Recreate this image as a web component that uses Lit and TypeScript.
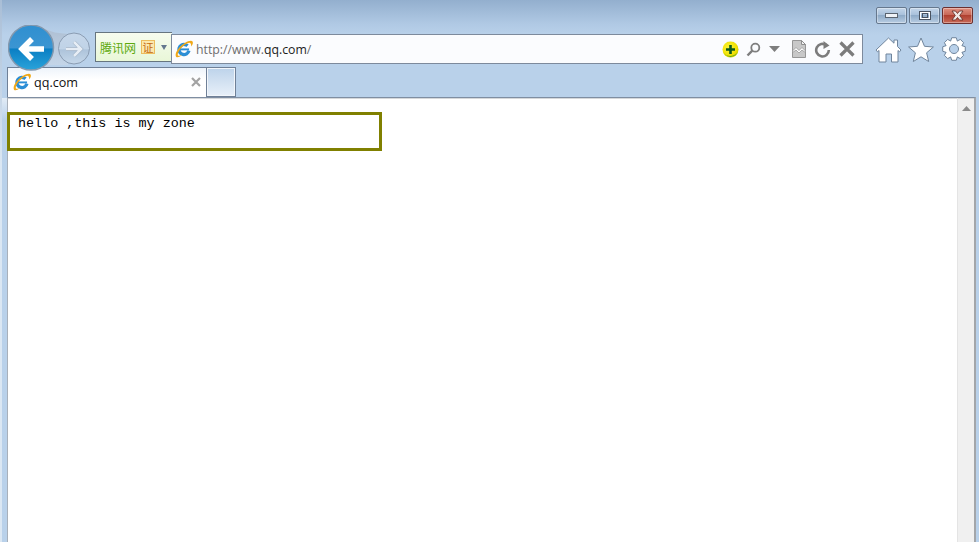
import { LitElement, html, css, svg } from "lit";
import { customElement } from "lit/decorators.js";

const ieLogo = (size: number) => html`<svg class="ie" width=${size} height=${size} viewBox="0 0 16 16">
  <circle cx="8" cy="8.400" r="4.500" fill="none" stroke="#2b8ed6" stroke-width="3" stroke-dasharray="23 6" transform="rotate(14 8 8.400)"/>
  <rect x="4.500" y="7.500" width="8" height="1.700" fill="#2b8ed6"/>
  <path d="M.9 14.800C-.6 12.400 3 6 8.400 2.800 12 .7 14.800.2 15.600 1.300c.7 1 .1 2.900-1.100 4.500-.1-1.700-.4-3.200-1.500-3.400C11.400 2.200 5 6 2.900 11c-.6 1.500-.6 2.500-.1 3 .8.300 2.300-.1 3.700-1.100-1.700 1.900-4.500 3.400-5.600 1.900z" fill="#f0a818"/>
</svg>`;

const gearPath = (() => {
  const pts: string[] = [];
  const cx = 12, cy = 12, teeth = 8;
  for (let i = 0; i < teeth; i++) {
    const a = (i / teeth) * Math.PI * 2;
    const w = 0.2, g = 0.2;
    const p = (r: number, t: number) => `${(cx + r * Math.cos(t)).toFixed(2)} ${(cy + r * Math.sin(t)).toFixed(2)}`;
    pts.push(p(8.6, a - w - g), p(11.5, a - w), p(11.5, a + w), p(8.6, a + w + g));
  }
  return "M" + pts.join("L") + "Z";
})();

@customElement("app-root")
export class AppRoot extends LitElement {
  static styles = css`
    :host { display: flex; flex-direction: column; width: 979px; height: 542px; overflow: hidden; position: relative;
      background: #b9d1ea; font-family: "Open Sans", "Noto Sans", sans-serif; }
    .edge { position: absolute; left: 0; top: 0; bottom: 0; width: 2px; background: linear-gradient(#a9bed6, #dbe7f3 30%, #dbe7f3); }
    .top { height: 24px; box-sizing: border-box; padding: 7px 6px 0 0; display: flex; justify-content: flex-end; gap: 2px;
      background: linear-gradient(#93afce, #b0c9e4); }
    .wbtn { width: 31px; height: 17px; box-sizing: border-box; border: 1px solid #66788e; border-radius: 2px;
      display: flex; align-items: center; justify-content: center;
      background: linear-gradient(#c4d6ea 0, #a9c1db 45%, #8fabc8 50%, #b8cde3 100%); box-shadow: inset 0 0 0 1px rgba(255,255,255,.35); }
    .wbtn.close { width: 31px; border-color: #6b3030; background: linear-gradient(#e09080 0, #c86858 45%, #b04030 50%, #c86a58 100%); }
    .nav { height: 43px; display: flex; align-items: flex-start; padding-left: 8px;
      background: linear-gradient(#b0c9e4, #b9d1ea 25%); }
    .arrows { flex: none; margin-top: 1px; margin-bottom: -4px; position: relative; z-index: 2; }
    .ident { flex: none; box-sizing: border-box; margin-left: 3px; margin-top: 8px; width: 77px; height: 30px;
      border: 1px solid #66757f; border-right: none; background: linear-gradient(#f6fcee, #e9f7d8);
      display: flex; align-items: center; padding-left: 4px; }
    .cn { font: 12px "Noto Sans CJK SC", sans-serif; color: #5da90e; letter-spacing: 0; }
    .cert { font: 12px/13px "Noto Sans CJK SC", sans-serif; box-sizing: border-box; width: 14px; height: 14px; margin-left: 5px;
      background: #fbe8ae; border: 1px solid #edbc5c; color: #c46a10; display: flex; align-items: center; justify-content: center; font-size: 11px; }
    .drop { margin-left: 6px; }
    .url { flex: none; box-sizing: border-box; margin-left: -1px; margin-top: 10px; width: 692px; height: 30px; position: relative;
      border: 1px solid #7d8a9c; background: #fbfcfe; display: flex; align-items: center; padding-left: 3px; }
    .addr { margin-left: 3px; padding-top: 1px; font-size: 12.3px; color: #6e6e6e; flex: 1; }
    .addr b { font-weight: 400; color: #1c1c1c; }
    .urltools { display: flex; align-items: center; margin-right: 7px; }
    .urltools svg { display: block; flex: none; }
    .m1 { margin-left: 7px; }
    .m2 { margin-left: 8px; }
    .m3 { margin-left: 12px; }
    .m4 { margin-left: 8px; }
    .m5 { margin-left: 8px; }
    .tools { display: flex; margin-left: 12px; margin-top: 13px; gap: 6px; align-items: flex-start; }
    .tools svg { display: block; flex: none; }
    .gear { margin-left: 2px; }
    .tabs { height: 30px; display: flex; padding-left: 7px; }
    .tab { width: 200px; box-sizing: border-box; height: 30px; border: 1px solid #6f8097; border-bottom: none;
      background: linear-gradient(#eef4fb, #ffffff 40%); display: flex; align-items: center; padding: 0 5px 1px 5px; }
    .tab span { margin-left: 3px; font-size: 12.6px; color: #111; flex: 1; }
    .newtab { width: 29px; box-sizing: border-box; height: 30px; border: 1px solid #6f8097; border-left: none; box-shadow: inset 0 0 0 1px #f2f6fb;
      background: linear-gradient(#bdd3ea, #e8f0f9); }
    .main { flex: 1; display: flex; margin: 0 3px 0 7px; border-top: 1px solid #7f8ea2; min-height: 0; position: relative;
      border-left: 1px solid #a8b0ba; border-right: 2px solid #a3a6aa; }
    .main::before { content: ""; position: absolute; left: -6px; top: 0; width: 5px; height: 22px; background: linear-gradient(#e2ecf6, #b9d1ea); }
    .page { flex: 1; background: #fff; padding-top: 14px; box-shadow: inset 0 1px 0 #d6d8da; }
    .zone { box-sizing: border-box; width: 375px; height: 39px; margin-left: -1px; border: 3px solid #808000; padding: 1px 0 0 8px; position: relative;
      font: 13.4px/16px "Liberation Mono", monospace; color: #000; background: #fff; white-space: pre; }
    .bar { width: 17px; background: #f0f0f0; border-left: 1px solid #e4e4e4; box-sizing: border-box; display: flex; justify-content: center; padding-top: 8px; box-shadow: inset 0 1px 0 #d6d8da; }
    .bar svg { display: block; }
  `;

  render() {
    return html`
      <div class="edge"></div>
      <div class="top">
        <div class="wbtn"><svg width="13" height="6"><rect x=".5" y=".5" width="12" height="4" fill="#eef2f7" stroke="#5a6470"/></svg></div>
        <div class="wbtn"><svg width="14" height="11"><rect x="1.500" y="1.500" width="11" height="8" fill="none" stroke="#4a5360" stroke-width="1"/><rect x="2.500" y="2.500" width="9" height="6" fill="none" stroke="#fff"/><rect x="4.500" y="3.500" width="5" height="4" fill="none" stroke="#4a5360"/></svg></div>
        <div class="wbtn close"><svg width="15" height="11" viewBox="0 0 15 11"><path d="M2 1h3.500l2 2.500 2-2.500H13L9.700 5.500 13 10H9.500l-2-2.500-2 2.500H2l3.300-4.500z" fill="#f1e8e4" stroke="#5f2a22" stroke-width=".8"/></svg></div>
      </div>
      <div class="nav">
        <svg class="arrows" width="84" height="46" viewBox="0 0 84 46">
          <defs>
            <linearGradient id="bk" x1="0" y1="0" x2="0" y2="1"><stop offset="0" stop-color="#2f8fd0"/><stop offset=".5" stop-color="#3b95d2"/><stop offset=".54" stop-color="#0b7fc4"/><stop offset="1" stop-color="#2aa3da"/></linearGradient>
            <linearGradient id="fw" x1="0" y1="0" x2="0" y2="1"><stop offset="0" stop-color="#c6d7ea"/><stop offset=".5" stop-color="#c0d3e7"/><stop offset=".55" stop-color="#aec4db"/><stop offset="1" stop-color="#c6d8ea"/></linearGradient>
            <linearGradient id="cn" x1="0" y1="0" x2="0" y2="1"><stop offset="0" stop-color="#adbed2"/><stop offset="1" stop-color="#c4d5e8"/></linearGradient>
          </defs>
          <path d="M22 1C32 1 38 5 47 7.500 L60 9 L60 40 L40 40 Z" fill="url(#cn)"/>
          <circle cx="66" cy="23.500" r="15.500" fill="url(#fw)" stroke="#8a9cb2" stroke-width="1"/>
          <path d="M58 24H72M66 17 73 24 66 31" fill="none" stroke="#9fb1c5" stroke-width="3.800"/>
          <path d="M58 24H72M66 17 73 24 66 31" fill="none" stroke="#e6edf5" stroke-width="2.600"/>
          <circle cx="23" cy="22.500" r="22.500" fill="url(#bk)" stroke="#8398ae" stroke-width="1.500"/>
          <path d="M36 24H14M24 14 14 24 24 34" fill="none" stroke="#fff" stroke-width="5.500"/>
        </svg>
        <div class="ident">
          <span class="cn">腾讯网</span>
          <span class="cert">证</span>
          <svg class="drop" width="6" height="5"><path d="M0 0h6L3 5z" fill="#64788e"/></svg>
        </div>
        <div class="url">
          ${ieLogo(18)}
          <div class="addr">http://www.<b>qq.com</b>/</div>
          <div class="urltools">
            <svg width="17" height="17" viewBox="0 0 17 17"><defs><radialGradient id="y" cx=".4" cy=".4" r=".7"><stop offset="0" stop-color="#fff63c"/><stop offset=".7" stop-color="#f0e000"/><stop offset="1" stop-color="#b8c400"/></radialGradient></defs><circle cx="8.500" cy="8.500" r="8" fill="url(#y)"/><path d="M1.500 11.500a8 8 0 0 0 14 0 9 9 0 0 1-7 3.500 8 8 0 0 1-7-3.500z" fill="#2d9a2a"/><path d="M3.500 2.200a8 8 0 0 1 10 0 7.500 7.500 0 0 0-10 0z" fill="#2d9a2a"/><path d="M7.200 4h2.600v3.200H13v2.600H9.800V13H7.200V9.800H4V7.200h3.200z" fill="#0c5a1c"/></svg>
            <svg class="m1" width="15" height="15" viewBox="0 0 15 15"><circle cx="9.300" cy="5.700" r="4" fill="none" stroke="#7e7e7e" stroke-width="1.800"/><path d="M6.300 8.700 1.500 13.500" stroke="#7e7e7e" stroke-width="2.400"/></svg>
            <svg class="m2" width="11" height="6"><path d="M0 0h11L5.500 6z" fill="#7e7e7e"/></svg>
            <svg class="m3" width="14" height="18" viewBox="0 0 14 18"><path d="M.5.500h9l4 4v13H.5z" fill="#c8c8c8" stroke="#969696"/><path d="M9.500.5v4h4z" fill="#f2f2f2" stroke="#8e8e8e"/><path d="M.5 11l3.500-3.500 3 3 3-3 3.500 3.500v1.500l-3.500-2.500-3 3-3-3-3.500 2.500z" fill="#fff" stroke="#8e8e8e" stroke-width=".7"/></svg>
            <svg class="m4" width="17" height="17" viewBox="0 0 17 17"><path d="M12.500 4.300A6.300 6.300 0 1 0 14.800 9" fill="none" stroke="#7c7c7c" stroke-width="2.600"/><path d="M9.500 0 15.500 4.500 9.500 8z" fill="#7c7c7c"/></svg>
            <svg class="m5" width="16" height="16" viewBox="0 0 16 16"><path d="M1.500 1.500l13 13M14.500 1.500l-13 13" stroke="#7c7c7c" stroke-width="3.200"/></svg>
          </div>
        </div>
        <div class="tools">
          <svg width="27" height="26" viewBox="0 0 27 26"><path d="M13.500 1 19 6.200V3h3.500v6.500L26 13l-1.500 1.800-1.500-1.300V25h-6.500v-8h-5.500v8H4V13.500l-1.500 1.300L1 13z" fill="#fff" stroke="#70859c" stroke-width="1" stroke-linejoin="round"/></svg>
          <svg width="26" height="25" viewBox="0 0 26 25"><path d="M13 1l3.500 8.300 8.900.7-6.800 5.800 2.100 8.700L13 19.800 5.300 24.500l2.100-8.700L.6 10l8.900-.7z" fill="#fff" stroke="#70859c" stroke-linejoin="round"/></svg>
          <svg class="gear" width="24" height="24" viewBox="0 0 24 24"><path fill-rule="evenodd" d=${gearPath + " M12 7.500a4.500 4.500 0 1 0 .01 0z"} fill="#fff" stroke="#70859c" stroke-linejoin="round"/></svg>
        </div>
      </div>
      <div class="tabs">
        <div class="tab">
          ${ieLogo(18)}
          <span>qq.com</span>
          <svg width="10" height="10" viewBox="0 0 10 10"><path d="M1 1l8 8M9 1 1 9" stroke="#a3a3a3" stroke-width="2.200"/></svg>
        </div>
        <div class="newtab"></div>
      </div>
      <div class="main">
        <div class="page"><div class="zone">hello ,this is my zone</div></div>
        <div class="bar"><svg width="9" height="5">${svg`<path d="M4.500 0 9 5H0z" fill="#8a8a8a"/>`}</svg></div>
      </div>
    `;
  }
}
